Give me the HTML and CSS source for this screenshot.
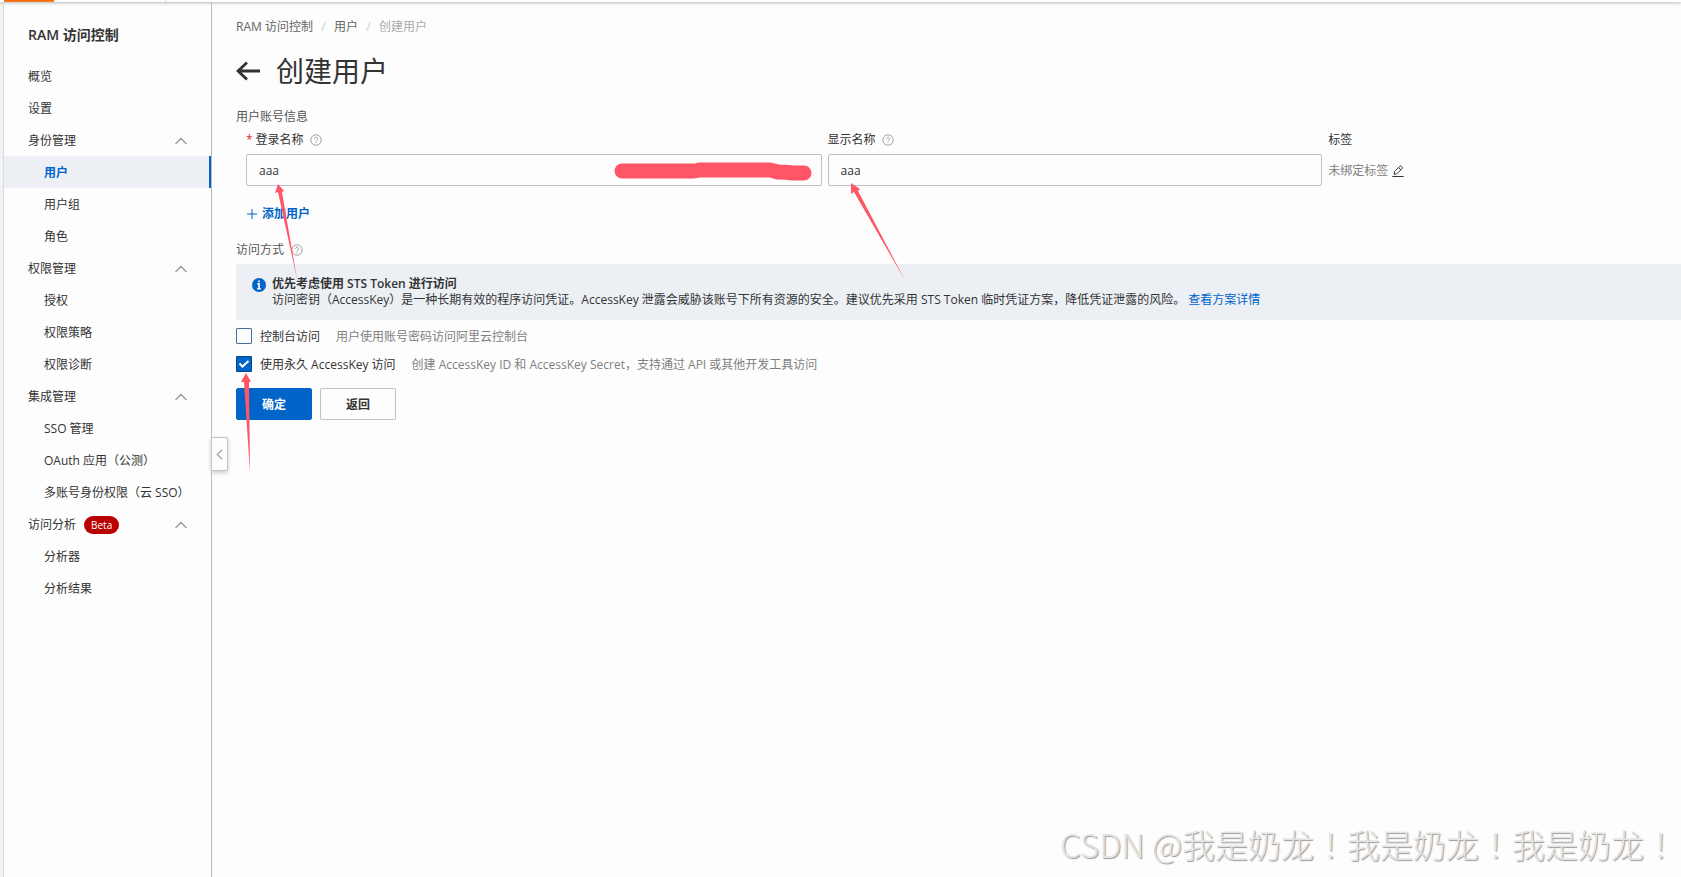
FILE: index.html
```html
<!DOCTYPE html>
<html lang="zh-CN">
<head>
<meta charset="utf-8">
<title>创建用户 - RAM 访问控制</title>
<link rel="stylesheet" href="styles.css">
</head>
<body>
<svg class="sprite" aria-hidden="true">
  <symbol id="up" viewBox="0 0 14 8"><path d="M1.500 7 7 1.500 12.500 7" fill="none" stroke="currentColor" stroke-width="1.600"/></symbol>
  <symbol id="help" viewBox="0 0 12 12"><circle cx="6" cy="6" r="5.200" fill="none" stroke="currentColor" stroke-width=".9"/><path d="M4.300 4.800a1.700 1.600 0 1 1 2.600 1.400Q6 6.600 6 7.300M6 8.200v1" fill="none" stroke="currentColor" stroke-width=".9"/></symbol>
</svg>
<header class="topbar"><span class="topbar-brand"></span><span class="topbar-divider"></span></header>
<div class="layout">
  <nav class="sidebar" aria-label="RAM 访问控制">
    <h2 class="sidebar-title">RAM 访问控制</h2>
    <a class="item" href="#">概览</a>
    <a class="item" href="#">设置</a>
    <button class="item group" type="button"><span>身份管理</span><svg class="chevron"><use href="#up"/></svg></button>
    <a class="item child active" href="#" aria-current="page">用户</a>
    <a class="item child" href="#">用户组</a>
    <a class="item child" href="#">角色</a>
    <button class="item group" type="button"><span>权限管理</span><svg class="chevron"><use href="#up"/></svg></button>
    <a class="item child" href="#">授权</a>
    <a class="item child" href="#">权限策略</a>
    <a class="item child" href="#">权限诊断</a>
    <button class="item group" type="button"><span>集成管理</span><svg class="chevron"><use href="#up"/></svg></button>
    <a class="item child" href="#">SSO 管理</a>
    <a class="item child" href="#">OAuth 应用（公测）</a>
    <a class="item child" href="#">多账号身份权限（云 SSO）</a>
    <button class="item group" type="button"><span>访问分析</span><span class="beta">Beta</span><svg class="chevron"><use href="#up"/></svg></button>
    <a class="item child" href="#">分析器</a>
    <a class="item child" href="#">分析结果</a>
    <button class="collapse" type="button" aria-label="收起"><svg viewBox="0 0 8 14"><path d="M7 1.500 1.500 7 7 12.500" fill="none" stroke="currentColor" stroke-width="1.700"/></svg></button>
  </nav>
  <main class="content">
    <nav class="crumbs" aria-label="路径"><a href="#">RAM 访问控制</a><span class="slash">/</span><a href="#">用户</a><span class="slash">/</span><span class="current">创建用户</span></nav>
    <div class="heading">
      <a class="back" href="#" aria-label="返回"><svg viewBox="0 0 24 20"><path d="M24 10H2M11 1.500 2 10l9 8.500" fill="none" stroke="currentColor" stroke-width="2.800"/></svg></a>
      <h1>创建用户</h1>
    </div>
    <form class="form">
      <h3 class="section">用户账号信息</h3>
      <div class="fields">
        <div class="field">
          <div class="label-row"><label for="login"><span class="required">*</span>登录名称</label><svg class="help"><use href="#help"/></svg></div>
          <input class="text" id="login" type="text" value="aaa">
        </div>
        <div class="field">
          <div class="label-row"><label for="display">显示名称</label><svg class="help"><use href="#help"/></svg></div>
          <input class="text" id="display" type="text" value="aaa">
        </div>
        <div class="field">
          <div class="label-row">标签</div>
          <div class="tag-value"><span>未绑定标签</span><button class="edit" type="button" aria-label="编辑标签"><svg viewBox="0 0 12 12"><path d="M.3 11.500h11.400M2.200 9.300l.3-2.700L7.900 1.200a.9.900 0 0 1 1.300 0l1 .9a.9.900 0 0 1 0 1.300L4.800 8.900zM6.600 2.600 8.900 4.800" fill="none" stroke="currentColor"/></svg></button></div>
        </div>
      </div>
      <button class="add" type="button"><svg viewBox="0 0 10 10"><path d="M5 0v10M0 5h10" stroke="currentColor" fill="none"/></svg>添加用户</button>
      <h3 class="section access">访问方式<svg class="help"><use href="#help"/></svg></h3>
      <div class="notice">
        <svg class="info" viewBox="0 0 14 14"><circle cx="7" cy="7" r="7" fill="#0064c8"/><path d="M7 2.400v1.900M5.400 5.900H7v4.600M5.200 10.700h3.600" fill="none" stroke="#fff" stroke-width="1.600"/></svg>
        <div class="notice-text"><strong>优先考虑使用 STS Token 进行访问</strong><p>访问密钥（AccessKey）是一种长期有效的程序访问凭证。AccessKey 泄露会威胁该账号下所有资源的安全。建议优先采用 STS Token 临时凭证方案，降低凭证泄露的风险。 <a href="#">查看方案详情</a></p></div>
      </div>
      <div class="option"><input id="console" type="checkbox"><label for="console">控制台访问</label><span class="hint">用户使用账号密码访问阿里云控制台</span></div>
      <div class="option"><input id="key" type="checkbox" checked><label for="key">使用永久 AccessKey 访问</label><span class="hint">创建 AccessKey ID 和 AccessKey Secret，支持通过 API 或其他开发工具访问</span></div>
      <div class="actions"><button class="btn primary" type="submit">确定</button><button class="btn" type="button">返回</button></div>
    </form>
  </main>
</div>
<svg class="marks" width="1000" height="500" viewBox="0 0 1000 500" aria-hidden="true">
  <path d="M622 171h71q3 0 6-1h71l8 2q8 0 15 1h11" fill="none" stroke="#ff5566" stroke-width="15" stroke-linecap="round" stroke-linejoin="round"/>
  <g fill="#ff5566">
    <path d="M278 184l6 7-2 1 15 87-19-87-3 1z"/>
    <path d="M851 183l9 6-2 2 48 91-52-90-3 2z"/>
    <path d="M246 373l5 9h-2l1 91-6-91h-3z"/>
  </g>
</svg>
<div class="watermark" lang="zh-TW">CSDN @我是奶龙！我是奶龙！我是奶龙！</div>
</body>
</html>
```
FILE: styles.css
```css
* { box-sizing: border-box; }
body {
  margin: 0;
  min-height: 100vh;
  display: flex;
  flex-direction: column;
  background: #fdfdfd;
  color: #333;
  font: 12px/16px "Open Sans", "Noto Sans CJK SC", sans-serif;
  position: relative;
}
button, input { font: inherit; color: inherit; margin: 0; }
button { background: none; border: 0; padding: 0; cursor: pointer; }
a { color: inherit; text-decoration: none; }
h1, h2, h3, p { margin: 0; font-weight: 400; }
svg { display: block; flex: none; }
.sprite { position: absolute; width: 0; height: 0; }

.topbar {
  height: 2px;
  padding-left: 4px;
  display: flex;
  justify-content: flex-start;
  gap: 111px;
  background: #fff;
  box-shadow: 0 1px 3px 0 #aaa;
  position: relative;
}
.topbar-brand { width: 50px; background: #ff6a00; }
.topbar-divider { width: 1px; background: #ddd; }

.layout { flex: 1; display: flex; border-left: 4px solid #f4f4f4; }
.sidebar {
  flex: none;
  width: 208px;
  padding-top: 22px;
  border-right: 1px solid #bbbcc0;
  box-shadow: -1px 0 1px #ddd;
  position: relative;
}
.sidebar-title { padding-left: 24px; margin-bottom: 14px; font-size: 14px; line-height: 22px; font-weight: 600; }
.item { display: flex; align-items: center; width: 100%; height: 32px; padding: 2px 0 0 24px; text-align: left; }
.child { padding-left: 40px; }
.active { background: #ecf0f5; border-right: 2px solid #0064c8; color: #0064c8; font-weight: 600; }
.chevron { width: 14px; height: 8px; margin: 0 23px 0 auto; color: #a3a3a3; }
.beta { margin-left: 8px; padding: 0 7px; border-radius: 9px; background: #b90000; color: #fff; font-size: 10px; line-height: 18px; }
.collapse {
  position: absolute;
  top: 435px;
  left: 100%;
  width: 17px;
  height: 34px;
  display: grid;
  place-items: center;
  background: #fdfdfd;
  border: 1px solid #bfc2c8;
  border-radius: 0 2px 2px 0;
  box-shadow: 0 2px 4px #ccc;
  color: #a9abb0;
}
.collapse svg { width: 7px; height: 13px; }

.content { flex: 1; min-width: 0; padding: 17px 0 0 24px; }
.crumbs { display: flex; color: #666; }
.slash { width: 21px; text-align: center; color: #ccc; }
.current { color: #aaa; }
.heading { display: flex; align-items: center; gap: 16px; margin: 15px 0 17px; height: 42px; }
.heading h1 { font-size: 28px; line-height: 42px; }
.back svg { width: 24px; height: 20px; }
.section { display: flex; align-items: center; gap: 7px; font-size: 12px; line-height: 16px; color: #555; }
.help { width: 12px; height: 12px; color: #999; }
.fields { display: grid; grid-template-columns: 576fr 495fr 353fr; gap: 6px; margin: 7px 0 20px; padding-left: 10px; }
.label-row { display: flex; align-items: center; gap: 6px; height: 16px; margin-bottom: 6px; }
.required { color: #d93026; margin-right: 3px; }
.text { display: block; width: 100%; height: 32px; padding: 0 12px; background: transparent; border: 1px solid #bfc0c8; border-radius: 2px; }
.tag-value { display: flex; align-items: center; gap: 4px; height: 32px; padding-top: 2px; color: #808080; }
.edit { color: #333; }
.edit svg { width: 12px; height: 12px; }
.add { display: flex; align-items: center; gap: 5px; margin-left: 11px; color: #0064c8; font-weight: 600; }
.add svg { width: 10px; height: 10px; }
.access { margin: 20px 0 6px; }
.notice { display: flex; gap: 6px; padding: 12px 16px; background: #ecf0f5; }
.info { width: 14px; height: 14px; margin-top: 2px; }
.notice strong { display: block; font-weight: 600; }
.notice a { color: #0064c8; }
.option { display: flex; align-items: center; height: 16px; margin-top: 8px; }
.option + .option { margin-top: 12px; }
.option label, .hint { padding-top: 2px; }
.option input {
  appearance: none;
  width: 16px;
  height: 16px;
  margin-right: 8px;
  border: 1px solid #45709b;
  border-radius: 1px;
}
.option input:checked {
  border-color: #00438a;
  background: #0064c8 url("data:image/svg+xml,%3Csvg xmlns='http://www.w3.org/2000/svg' viewBox='0 0 14 14'%3E%3Cpath d='M2.500 6.500 5.500 9.500 11.500 4' fill='none' stroke='white' stroke-width='2'/%3E%3C/svg%3E") center / 14px no-repeat;
}
.hint { margin-left: 16px; color: #808080; }
.actions { display: flex; gap: 8px; margin-top: 16px; }
.btn { width: 76px; height: 32px; padding-top: 2px; border: 1px solid #bfc0c8; border-radius: 2px; font-weight: 600; }
.primary { background: #0064c8; border-color: #0064c8; color: #fff; }

.marks { position: absolute; top: 0; left: 0; pointer-events: none; }
.watermark {
  position: absolute;
  right: 4px;
  bottom: 9px;
  font: 300 33px/48px "Noto Sans CJK TC", sans-serif;
  white-space: nowrap;
  color: #e4e4e4;
  text-shadow: 1px 1px 1px #999;
  pointer-events: none;
}
```
